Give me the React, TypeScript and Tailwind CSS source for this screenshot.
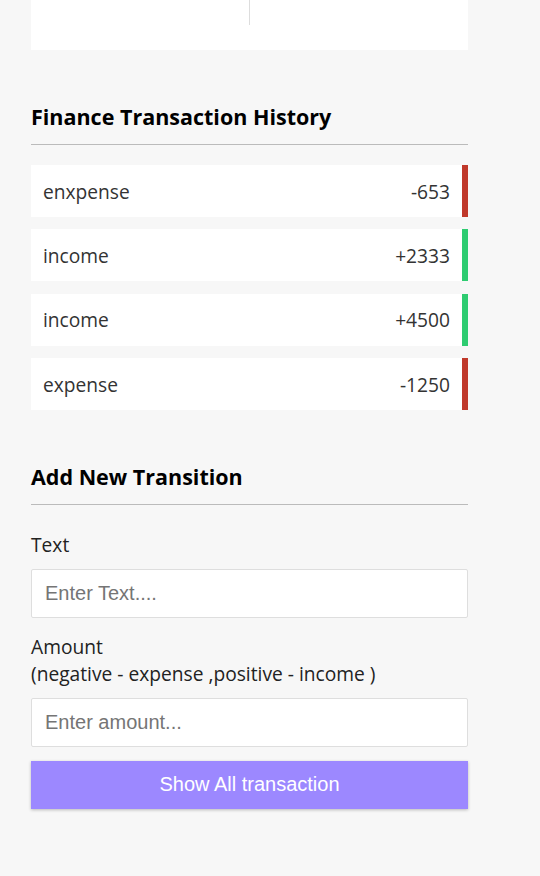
const history = [
  { text: 'enxpense', amount: -653 },
  { text: 'income', amount: 2333 },
  { text: 'income', amount: 4500 },
  { text: 'expense', amount: -1250 },
];

export default function App() {
  return (
    <div className="min-h-screen bg-[#f7f7f7] font-['Open_Sans',sans-serif] text-[19.2px] leading-[27px] text-[#222]">
      <div className="w-[437px] ml-[31px] pb-16">
        <div className="h-[50px] bg-white flex">
          <div className="w-1/2 h-[25px] border-r border-[#ddd]" />
          <div className="w-1/2" />
        </div>

        <SectionTitle className="mt-[52px]">Finance Transaction History</SectionTitle>
        <ul className="mt-5 flex flex-col gap-[12.4px]">
          {history.map((t, i) => (
            <HistoryRow key={i} text={t.text} amount={t.amount} />
          ))}
        </ul>

        <SectionTitle className="mt-[52px]">Add New Transition</SectionTitle>
        <form className="mt-[26px]" onSubmit={(e) => e.preventDefault()}>
          <label className="block">Text</label>
          <input
            type="text"
            placeholder="Enter Text...."
            className="mt-[10.5px] block w-full h-[49px] bg-white border border-[#dedede] rounded-[2px] px-[13px] font-['Liberation_Sans',Arial,sans-serif] text-[20px] placeholder:text-[#757575] outline-none"
          />
          <label className="block mt-[15.5px]">
            Amount
            <br />
            (negative - expense ,positive - income )
          </label>
          <input
            type="number"
            placeholder="Enter amount..."
            className="mt-[10.5px] block w-full h-[49px] bg-white border border-[#dedede] rounded-[2px] px-[13px] font-['Liberation_Sans',Arial,sans-serif] text-[20px] placeholder:text-[#757575] outline-none"
          />
          <button className="mt-[14px] block w-full h-[48px] bg-[#9c88ff] text-white font-['Liberation_Sans',Arial,sans-serif] text-[20px] shadow-[0_1px_3px_rgba(0,0,0,0.25)]">
            Show All transaction
          </button>
        </form>
      </div>
    </div>
  );
}

function SectionTitle({ children, className }: { children: React.ReactNode; className?: string }) {
  return (
    <h3 className={`text-[21.5px] leading-[30px] font-bold text-black pb-3 border-b border-[#bbb] ${className ?? ''}`}>
      {children}
    </h3>
  );
}

function HistoryRow({ text, amount }: { text: string; amount: number }) {
  const minus = amount < 0;
  return (
    <li
      className={`h-[52px] bg-white flex items-center justify-between pl-3 pr-3 text-[#333] border-r-[6px] ${
        minus ? 'border-[#c0392b]' : 'border-[#2ecc71]'
      }`}
    >
      <span>{text}</span>
      <span>{minus ? '-' : '+'}{Math.abs(amount)}</span>
    </li>
  );
}
